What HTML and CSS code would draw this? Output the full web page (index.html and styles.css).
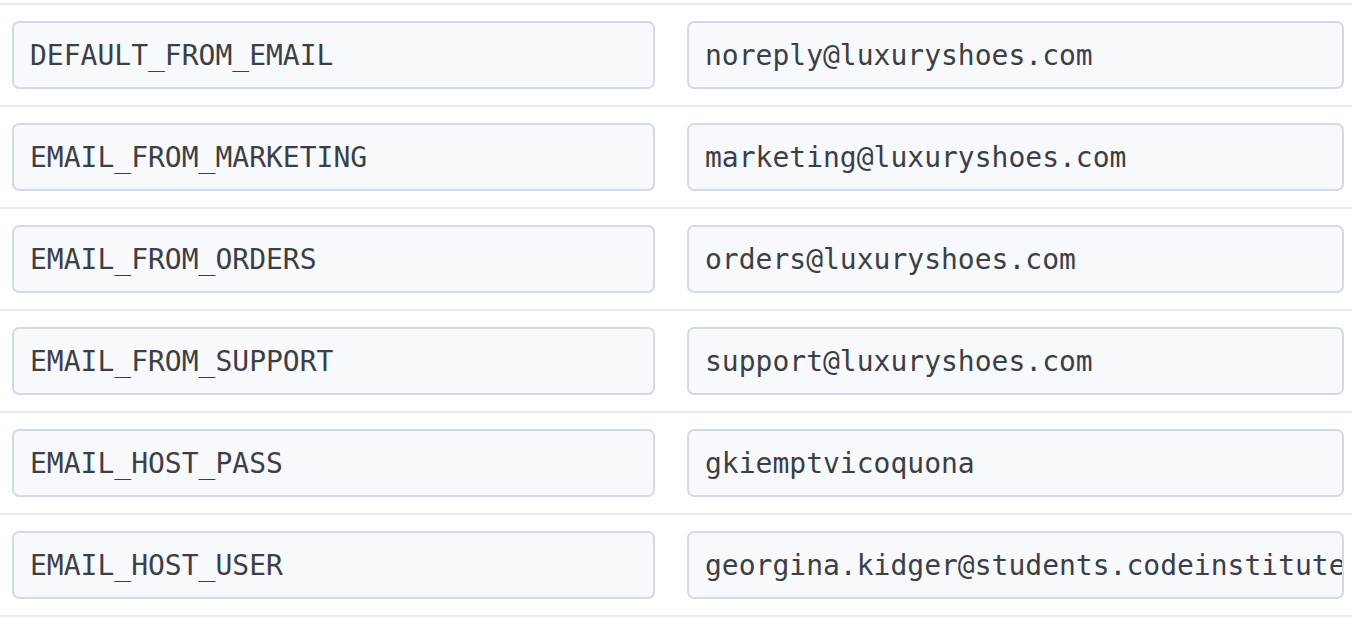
FILE: index.html
```html
<!DOCTYPE html>
<html>
<head>
<meta charset="utf-8">
<link rel="stylesheet" href="styles.css">
</head>
<body>
<div class="vars">
  <div class="row"><input class="field" readonly value="DEFAULT_FROM_EMAIL"><input class="field" readonly value="noreply@luxuryshoes.com"></div>
  <div class="row"><input class="field" readonly value="EMAIL_FROM_MARKETING"><input class="field" readonly value="marketing@luxuryshoes.com"></div>
  <div class="row"><input class="field" readonly value="EMAIL_FROM_ORDERS"><input class="field" readonly value="orders@luxuryshoes.com"></div>
  <div class="row"><input class="field" readonly value="EMAIL_FROM_SUPPORT"><input class="field" readonly value="support@luxuryshoes.com"></div>
  <div class="row"><input class="field" readonly value="EMAIL_HOST_PASS"><input class="field" readonly value="gkiemptvicoquona"></div>
  <div class="row"><input class="field" readonly value="EMAIL_HOST_USER"><input class="field" readonly value="georgina.kidger@students.codeinstitute.net"></div>
</div>
</body>
</html>
```
FILE: styles.css
```css
html, body {
  margin: 0;
  padding: 0;
  background: #ffffff;
}
.vars {
  padding-top: 3px;
}
.row {
  display: grid;
  grid-template-columns: 643px 657px;
  column-gap: 32px;
  padding: 16px 8px 16px 12px;
  border-top: 2px solid #e9ebf0;
}
.row:last-child {
  border-bottom: 2px solid #e9ebf0;
}
.field {
  box-sizing: border-box;
  width: 100%;
  height: 68px;
  margin: 0;
  padding: 0 0 0 16px;
  border: 2px solid #d3dae7;
  border-radius: 7px;
  background: #f8f9fc;
  color: #3c3f45;
  font-family: "DejaVu Sans Mono", monospace;
  font-size: 28px;
  outline: none;
}
```
